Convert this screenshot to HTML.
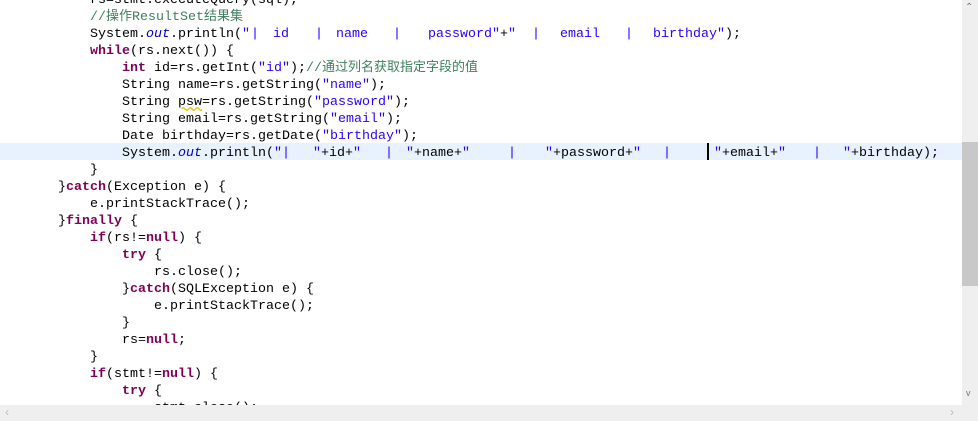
<!DOCTYPE html>
<html><head><meta charset="utf-8"><style>
body{margin:0;width:978px;height:421px;background:#fff;overflow:hidden;position:relative;font-family:"Liberation Mono","Noto Sans CJK SC",monospace;font-size:13.33px;color:#000}
.l{position:absolute;height:17px;line-height:17px;white-space:pre;margin-top:2px}
.k{color:#7f0055;font-weight:bold}
.s{color:#2a00ff}
.c{color:#3f7f5f}
.o{color:#0000c0;font-style:italic}
.cj{font-family:"Noto Sans CJK SC",sans-serif;font-size:13px;line-height:0}
.t{position:absolute;top:0;white-space:pre}
</style></head><body>
<div style="position:absolute;left:0;top:143px;width:962px;height:17px;background:#e8f2fe"></div>
<div style="position:absolute;left:707px;top:143px;width:2px;height:17px;background:#000"></div>
<div class="l" style="left:90px;top:-10px">rs=stmt.executeQuery(sql);</div>
<div class="l" style="left:90px;top:7px"><span class="c">//<span class="cj">操作</span>ResultSet<span class="cj">结果集</span></span></div>
<div class="l" style="left:0;top:24px;width:960px"><span class="t" style="left:90px">System.<span class="o">out</span>.println(<span class="s">"</span></span><span class="t s" style="left:251px">|</span><span class="t s" style="left:273px">id</span><span class="t s" style="left:315px">|</span><span class="t s" style="left:336px">name</span><span class="t s" style="left:393px">|</span><span class="t" style="left:428px"><span class="s">password"</span>+<span class="s">"</span></span><span class="t s" style="left:532px">|</span><span class="t s" style="left:560px">email</span><span class="t s" style="left:625px">|</span><span class="t" style="left:653px"><span class="s">birthday"</span>);</span></div>
<div class="l" style="left:90px;top:41px"><span class="k">while</span>(rs.next()) {</div>
<div class="l" style="left:122px;top:58px"><span class="k">int</span> id=rs.getInt(<span class="s">"id"</span>);<span class="c">//<span class="cj">通过列名获取指定字段的值</span></span></div>
<div class="l" style="left:122px;top:75px">String name=rs.getString(<span class="s">"name"</span>);</div>
<div class="l" style="left:122px;top:92px">String <span style="text-decoration:underline wavy #e8c000">psw</span>=rs.getString(<span class="s">"password"</span>);</div>
<div class="l" style="left:122px;top:109px">String email=rs.getString(<span class="s">"email"</span>);</div>
<div class="l" style="left:122px;top:126px">Date birthday=rs.getDate(<span class="s">"birthday"</span>);</div>
<div class="l" style="left:0;top:143px;width:960px"><span class="t" style="left:122px">System.<span class="o">out</span>.println(<span class="s">"</span></span><span class="t s" style="left:282px">|</span><span class="t" style="left:313px"><span class="s">"</span>+id+<span class="s">"</span></span><span class="t s" style="left:385px">|</span><span class="t" style="left:406px"><span class="s">"</span>+name+<span class="s">"</span></span><span class="t s" style="left:508px">|</span><span class="t" style="left:545px"><span class="s">"</span>+password+<span class="s">"</span></span><span class="t s" style="left:663px">|</span><span class="t" style="left:714px"><span class="s">"</span>+email+<span class="s">"</span></span><span class="t s" style="left:813px">|</span><span class="t" style="left:843px"><span class="s">"</span>+birthday);</span></div>
<div class="l" style="left:90px;top:160px">}</div>
<div class="l" style="left:58px;top:177px">}<span class="k">catch</span>(Exception e) {</div>
<div class="l" style="left:90px;top:194px">e.printStackTrace();</div>
<div class="l" style="left:58px;top:211px">}<span class="k">finally</span> {</div>
<div class="l" style="left:90px;top:228px"><span class="k">if</span>(rs!=<span class="k">null</span>) {</div>
<div class="l" style="left:122px;top:245px"><span class="k">try</span> {</div>
<div class="l" style="left:154px;top:262px">rs.close();</div>
<div class="l" style="left:122px;top:279px">}<span class="k">catch</span>(SQLException e) {</div>
<div class="l" style="left:154px;top:296px">e.printStackTrace();</div>
<div class="l" style="left:122px;top:313px">}</div>
<div class="l" style="left:122px;top:330px">rs=<span class="k">null</span>;</div>
<div class="l" style="left:90px;top:347px">}</div>
<div class="l" style="left:90px;top:364px"><span class="k">if</span>(stmt!=<span class="k">null</span>) {</div>
<div class="l" style="left:122px;top:381px"><span class="k">try</span> {</div>
<div class="l" style="left:154px;top:398px">stmt.close();</div>
<div style="position:absolute;left:962px;top:0;width:16px;height:405px;background:#efefef"></div>
<div style="position:absolute;left:962px;top:142px;width:16px;height:144px;background:#c8c8c8"></div>
<div style="position:absolute;left:965px;top:2px;font:10px 'DejaVu Sans';color:#777">&#8963;</div>
<div style="position:absolute;left:966px;top:388px;font:9px 'Liberation Sans';color:#777">v</div>
<div style="position:absolute;left:0;top:405px;width:978px;height:16px;background:#efefef"></div>
<div style="position:absolute;left:5px;top:405px;font:12px 'Liberation Sans';color:#bbb">&lsaquo;</div>
<div style="position:absolute;left:950px;top:405px;font:12px 'Liberation Sans';color:#bbb">&rsaquo;</div>
</body></html>
